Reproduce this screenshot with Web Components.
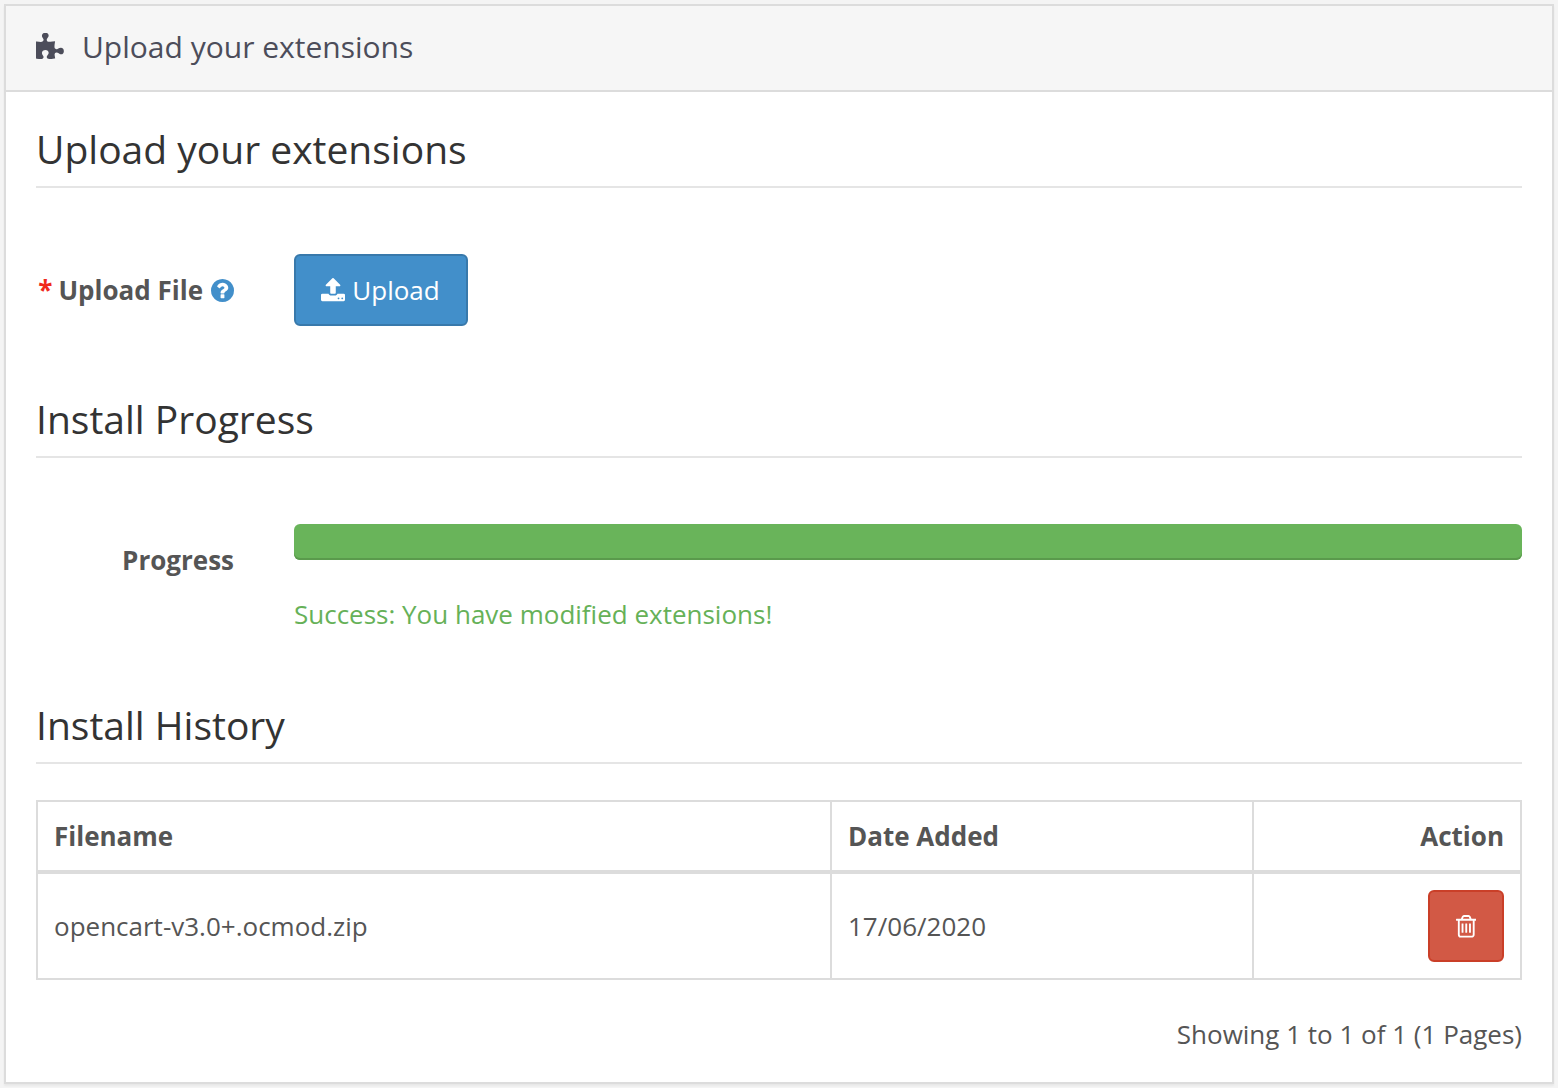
<!DOCTYPE html>
<html lang="en">
<head>
<meta charset="utf-8">
<title>Upload your extensions</title>
<style>
html,body{margin:0;height:100%;background:#f4f4f4}
body{box-sizing:border-box;padding:4px;font:26px/36px "Open Sans",sans-serif;color:#555;overflow:hidden}
</style>
</head>
<body>
<x-panel>
  <x-icon slot="icon" name="puzzle"></x-icon>
  <span slot="title">Upload your extensions</span>
  <x-section style="height:270px">
    <span slot="legend">Upload your extensions</span>
    <x-field required help>
      <span slot="label">Upload File</span>
      <x-button kind="primary"><x-icon name="upload"></x-icon><span>Upload</span></x-button>
    </x-field>
  </x-section>
  <x-section style="height:306px">
    <span slot="legend">Install Progress</span>
    <x-field>
      <span slot="label">Progress</span>
      <x-progress>Success: You have modified extensions!</x-progress>
    </x-field>
  </x-section>
  <x-section>
    <span slot="legend">Install History</span>
    <x-history></x-history>
  </x-section>
</x-panel>
<script>
const PATHS = {
  puzzle: 'M1755 1083q0 81-44.5 135t-123.5 54q-41 0-77.5-17.5t-59-38-56.5-38-71-17.5q-110 0-110 124 0 39 16 115t15 115v5q-22 0-33 1-34 3-97.5 11.5t-115.5 13.5-98 5q-61 0-103-26.5t-42-83.5q0-37 17.5-71t38-56.5 38-59 17.5-77.5q0-79-54-123.5t-135-44.5q-84 0-143 45.5t-59 127.5q0 43 15 83t33.5 64.5 33.5 53 15 50.5q0 45-46 89-37 35-117 35-95 0-245-24-9-2-27.5-4t-27.5-4l-13-2q-1 0-3-1-2 0-2-1v-1024q2 1 17.5 3.5t34 5 21.5 3.5q150 24 245 24 80 0 117-35 46-44 46-89 0-22-15-50.5t-33.5-53-33.5-64.5-15-83q0-82 59-127.5t144-45.5q80 0 134 44.5t54 123.5q0 41-17.5 77.5t-38 59-38 56.5-17.5 71q0 57 42 83.5t103 26.5q64 0 180-15t163-17v2q-1 2-3.5 17.5t-5 34-3.5 21.5q-24 150-24 245 0 80 35 117 44 46 89 46 22 0 50.5-15t53-33.5 64.5-33.5 83-15q82 0 127.5 59t45.5 143z',
  upload: 'M1344 1472q0-26-19-45t-45-19-45 19-19 45 19 45 45 19 45-19 19-45zm256 0q0-26-19-45t-45-19-45 19-19 45 19 45 45 19 45-19 19-45zm128-224v320q0 40-28 68t-68 28h-1472q-40 0-68-28t-28-68v-320q0-40 28-68t68-28h427q21 56 70.5 92t110.5 36h256q61 0 110.5-36t70.5-92h427q40 0 68 28t28 68zm-325-648q-17 40-59 40h-256v448q0 26-19 45t-45 19h-256q-26 0-45-19t-19-45v-448h-256q-42 0-59-40-17-39 14-69l448-448q18-19 45-19t45 19l448 448q31 30 14 69z',
  trash: 'M704 736v576q0 14-9 23t-23 9h-64q-14 0-23-9t-9-23v-576q0-14 9-23t23-9h64q14 0 23 9t9 23zm256 0v576q0 14-9 23t-23 9h-64q-14 0-23-9t-9-23v-576q0-14 9-23t23-9h64q14 0 23 9t9 23zm256 0v576q0 14-9 23t-23 9h-64q-14 0-23-9t-9-23v-576q0-14 9-23t23-9h64q14 0 23 9t9 23zm128 724v-948h-896v948q0 22 7 40.5t14.5 27 10.5 8.5h832q3 0 10.5-8.5t14.5-27 7-40.5zm-672-1076h448l-48-117q-7-9-17-11h-317q-10 2-17 11zm928 32v64q0 14-9 23t-23 9h-96v948q0 83-47 143.5t-113 60.5h-832q-66 0-113-58.5t-47-141.5v-952h-96q-14 0-23-9t-9-23v-64q0-14 9-23t23-9h309l70-167q15-37 54-63t79-26h320q40 0 79 26t54 63l70 167h309q14 0 23 9t9 23z',
  help: 'M1024 1376v-192q0-14-9-23t-23-9h-192q-14 0-23 9t-9 23v192q0 14 9 23t23 9h192q14 0 23-9t9-23zm256-672q0-88-55.5-163t-138.5-116-170-41q-243 0-371 213-15 24 8 42l132 100q7 6 19 6 16 0 25-12 53-68 86-92 34-24 86-24 48 0 85.5 26t37.5 59q0 38-20 61t-68 45q-63 28-115.5 86.5t-52.5 125.5v36q0 14 9 23t23 9h192q14 0 23-9t9-23q0-19 21.5-49.5t54.5-49.5q32-18 49-28.5t46-35 44.5-48 28-60.5 12.5-81zm384 192q0 209-103 385.5t-279.5 279.5-385.5 103-385.5-103-279.5-279.5-103-385.5 103-385.5 279.5-279.5 385.5-103 385.5 103 279.5 279.5 103 385.5z'
};
// Each glyph's tight view box and drawn size.
const BOXES = {
  puzzle: ['128 0 1664 1792', 28.5, 30],
  upload: ['64 0 1664 1792', 24, 26],
  trash: ['192 128 1408 1536', 20.5, 22.5],
  help: ['128 128 1536 1536', 23, 23]
};
function define(name, html) {
  customElements.define(name, class extends HTMLElement {
    constructor() {
      super();
      this.attachShadow({mode: 'open'}).innerHTML = html;
    }
  });
}
customElements.define('x-icon', class extends HTMLElement {
  connectedCallback() {
    if (this.shadowRoot) return;
    const n = this.getAttribute('name'), [vb, w, h] = BOXES[n];
    this.attachShadow({mode: 'open'}).innerHTML = `
      <style>:host{display:block;flex:none}svg{display:block;fill:currentColor}</style>
      <svg width="${w}" height="${h}" viewBox="${vb}" preserveAspectRatio="none"><path d="${PATHS[n]}"/></svg>`;
  }
});
define('x-panel', `
  <style>
    :host{display:flex;flex-direction:column;box-sizing:border-box;height:1080px;border:2px solid #dcdcdc;background:#fff;box-shadow:0 2px 2px rgba(0,0,0,.05)}
    header{display:flex;align-items:center;gap:17.5px;box-sizing:border-box;height:86px;padding:0 30px;border-bottom:2px solid #dcdcdc;background:#f6f6f6;color:#4c4d5a;font-size:30px;line-height:34px}
    ::slotted([slot=icon]){margin-top:-.5px}
    ::slotted([slot=title]){margin-top:-2px}
    main{padding:30px}
  </style>
  <header><slot name="icon"></slot><slot name="title"></slot></header>
  <main><slot></slot></main>`);
define('x-section', `
  <style>
    :host{display:block}
    h3{box-sizing:border-box;height:66px;margin:0;border-bottom:2px solid #e5e5e5;color:#333;font-weight:400;font-size:39px;line-height:53px}
  </style>
  <h3><slot name="legend"></slot></h3>
  <slot></slot>`);
define('x-field', `
  <style>
    :host{display:flex;align-items:flex-start;gap:60px;padding-top:66px}
    .label{display:flex;justify-content:flex-end;align-items:center;width:198px;padding-top:18px;font-weight:700;white-space:nowrap}
    .star,.help{display:none}
    :host([required]) .star{display:block;color:#f02a1c;margin-right:6px}
    :host([help]) .help{display:block;color:#428fca;margin-left:8px}
    .body{flex:1;min-width:0}
  </style>
  <div class="label"><span class="star">*</span><slot name="label"></slot><x-icon class="help" name="help"></x-icon></div>
  <div class="body"><slot></slot></div>`);
define('x-button', `
  <style>
    :host{display:inline-flex;vertical-align:top;align-items:center;justify-content:center;gap:7px;box-sizing:border-box;height:72px;border:2px solid #3879ab;border-radius:6px;background:#428fca;color:#fff}
    :host([kind=primary]){width:174px;padding-right:1px}
    :host([kind=danger]){width:76px;padding:1px .5px 0 0;border-color:#ca3f28;background:#d25945}
  </style>
  <slot></slot>`);
define('x-progress', `
  <style>
    :host{display:block;color:#66b158}
    .bar{height:36px;border-radius:6px;background:#69b45a;box-shadow:inset 0 -2px 0 #5a9a4c}
    .msg{margin-top:36px}
  </style>
  <div class="bar"></div><div class="msg"><slot></slot></div>`);
define('x-history', `
  <style>
    :host{display:block;padding-top:36px}
    .table{border:2px solid #dcdcdc}
    .row{display:grid;grid-template-columns:792px 422px 1fr;align-items:stretch}
    .head{height:68px;border-bottom:4px solid #dcdcdc;font-weight:700}
    .data{height:104px}
    .row>div{display:flex;align-items:center;padding:0 16px}
    .row>div+div{border-left:2px solid #dcdcdc}
    .row>div:last-child{justify-content:flex-end}
    footer{margin-top:36px;text-align:right}
  </style>
  <div class="table">
    <div class="row head"><div>Filename</div><div>Date Added</div><div>Action</div></div>
    <div class="row data"><div>opencart-v3.0+.ocmod.zip</div><div>17/06/2020</div><div><x-button kind="danger"><x-icon name="trash"></x-icon></x-button></div></div>
  </div>
  <footer>Showing 1 to 1 of 1 (1 Pages)</footer>`);
</script>
</body>
</html>
